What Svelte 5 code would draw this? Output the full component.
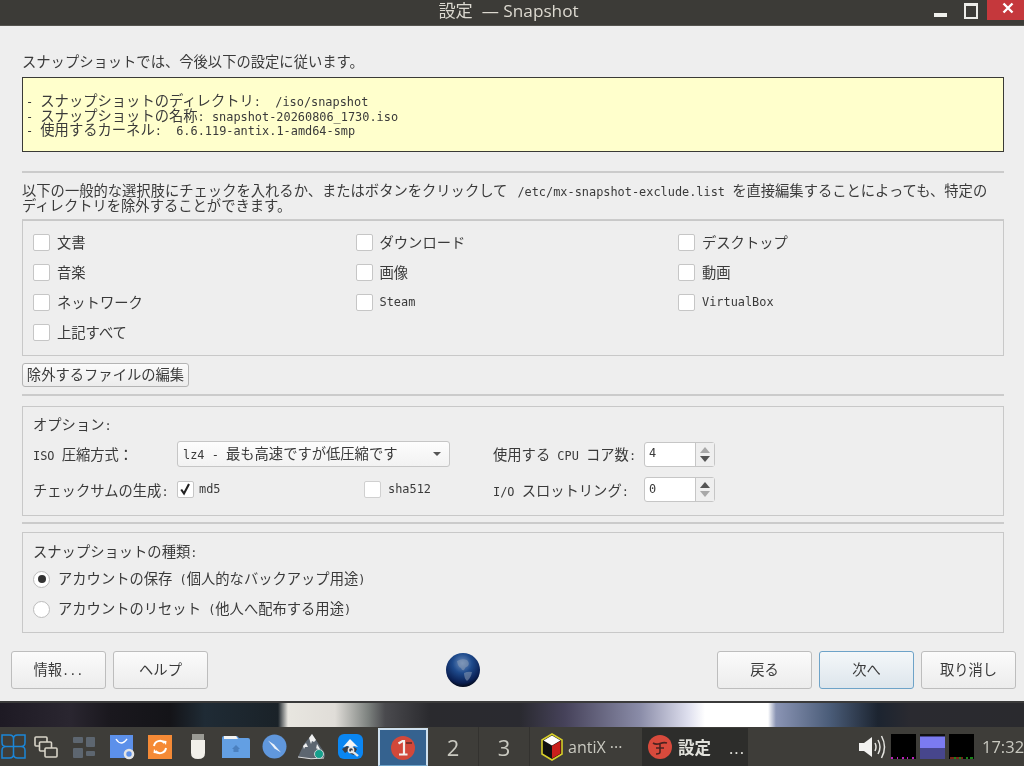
<script>
  const excludes = [
    ['文書', false], ['ダウンロード', false], ['デスクトップ', false],
    ['音楽', false], ['画像', false], ['動画', false],
    ['ネットワーク', false], ['Steam', true], ['VirtualBox', true],
    ['上記すべて', false]
  ];
</script>

<div class="screen">
  <header class="titlebar">
    <span class="title">設定 &nbsp;— Snapshot</span>
    <div class="winbtns">
      <span class="wmin"></span>
      <span class="wmax"></span>
      <span class="wclose">
        <svg width="12" height="12" viewBox="0 0 12 12"><path d="M1.5 1.5l9 9M10.5 1.5l-9 9" stroke="#fff" stroke-width="2.4" fill="none"/></svg>
      </span>
    </div>
  </header>

  <div class="window">
    <div class="content">
      <p class="intro">スナップショットでは、今後以下の設定に従います。</p>
      <div class="note">
        <div class="ln"><span class="m">-&nbsp;</span>スナップショットのディレクトリ<span class="m">:&nbsp;&nbsp;/iso/snapshot</span></div>
        <div class="ln"><span class="m">-&nbsp;</span>スナップショットの名称<span class="m">:&nbsp;snapshot-20260806_1730.iso</span></div>
        <div class="ln"><span class="m">-&nbsp;</span>使用するカーネル<span class="m">:&nbsp;&nbsp;6.6.119-antix.1-amd64-smp</span></div>
      </div>
      <hr class="sep s1" />
      <div class="desc">
        <div class="ln">以下の一般的な選択肢にチェックを入れるか、またはボタンをクリックして<span class="m path">/etc/mx-snapshot-exclude.list&nbsp;</span>を直接編集することによっても、特定の</div>
        <div class="ln">ディレクトリを除外することができます。</div>
      </div>
      <hr class="sep s2" />
      <section class="group excl">
        {#each excludes as [label, mono]}
          <label class="chk"><span class="box"></span><span class:m={mono} class:cj={!mono}>{label}</span></label>
        {/each}
      </section>
      <button class="btn editbtn">除外するファイルの編集</button>
      <hr class="sep s3" />
      <section class="group opts">
        <div class="optshead">オプション<span class="m">:</span></div>
        <div class="optgrid">
          <div class="lbl"><span class="m">ISO&nbsp;</span>圧縮方式：</div>
          <div class="combo"><span class="cj"><span class="m">lz4&nbsp;-&nbsp;</span>最も高速ですが低圧縮です</span><i class="caret"></i></div>
          <div class="lbl">使用する<span class="m">&nbsp;CPU&nbsp;</span>コア数<span class="m">:</span></div>
          <div class="spin"><span class="m">4</span><div class="arrows"><i class="up dim"></i><i class="down"></i></div></div>

          <div class="lbl">チェックサムの生成<span class="m">:</span></div>
          <div class="sums">
            <label class="chk md5">
              <span class="box"><svg width="15" height="15" viewBox="0 0 15 15"><path d="M3.2 7.5l2.8 4 5-9.5" stroke="#222" stroke-width="2.1" fill="none"/></svg></span>
              <span class="m">md5</span>
            </label>
            <label class="chk sha"><span class="box"></span><span class="m">sha512</span></label>
          </div>
          <div class="lbl"><span class="m">I/O&nbsp;</span>スロットリング<span class="m">:</span></div>
          <div class="spin"><span class="m">0</span><div class="arrows"><i class="up"></i><i class="down dim"></i></div></div>
        </div>
      </section>
      <hr class="sep s4" />
      <section class="group kinds">
        <div class="optshead">スナップショットの種類<span class="m">:</span></div>
        <label class="radio first"><span class="dot on"></span><span class="cj">アカウントの保存<span class="m">&nbsp;(</span>個人的なバックアップ用途<span class="m">)</span></span></label>
        <label class="radio"><span class="dot"></span><span class="cj">アカウントのリセット<span class="m">&nbsp;(</span>他人へ配布する用途<span class="m">)</span></span></label>
      </section>
    </div>

    <footer class="footer">
      <button class="btn big">情報<span class="m">...</span></button>
      <button class="btn big">ヘルプ</button>
      <svg class="globe" width="36" height="36" viewBox="0 0 36 36">
        <defs>
          <radialGradient id="gl" cx="0.48" cy="0.3" r="0.72">
            <stop offset="0" stop-color="#6f8fbd"/>
            <stop offset="0.4" stop-color="#1e4a8c"/>
            <stop offset="0.8" stop-color="#0a1f52"/>
            <stop offset="1" stop-color="#020610"/>
          </radialGradient>
        </defs>
        <circle cx="18" cy="18" r="17" fill="url(#gl)"/>
        <path d="M12 9q5-3 10-1 3 3 1 6-3 1-4 4-2 1-3-2-3-1-4-7zM19 21q4-2 8-1-1 6-5 9-3-3-3-8z" fill="#8d9db5" opacity=".55"/>
      </svg>
      <div class="rightbtns">
        <button class="btn big">戻る</button>
        <button class="btn big default">次へ</button>
        <button class="btn big">取り消し</button>
      </div>
    </footer>
  </div>

  <div class="wallpaper"></div>

  <nav class="taskbar">
    <span class="ti first">
      <svg width="25" height="25" viewBox="0 0 25 25" fill="none" stroke="#1b86d8" stroke-width="1.5"><path d="M12.5 12.5V5q0-4-4-4H1v7.500q0 4 4 4zM12.500 12.500V5q0-4 4-4H24v7.500q0 4-4 4zM12.500 12.500V20q0 4-4 4H1v-7.500q0-4 4-4zM12.500 12.500V20q0 4 4 4H24v-7.500q0-4-4-4z"/></svg>
    </span>
    <span class="ti">
      <svg width="24" height="24" viewBox="0 0 24 24" fill="#3e3d39" stroke="#d8d4c8" stroke-width="1.600"><rect x="1" y="2" width="12" height="9" rx="1"/><rect x="5.500" y="7" width="12" height="9" rx="1"/><rect x="11" y="13" width="12" height="9" rx="1"/></svg>
    </span>
    <span class="ti">
      <svg width="24" height="24" viewBox="0 0 24 24" fill="#5d6670"><rect x="1" y="2" width="10" height="6" rx="1"/><rect x="14" y="2" width="9" height="10" rx="1"/><rect x="1" y="13" width="10" height="10" rx="1"/><rect x="14" y="16" width="9" height="5" rx="1"/></svg>
    </span>
    <span class="ti">
      <svg width="26" height="26" viewBox="0 0 26 26"><rect x="1" y="1" width="23" height="23" fill="#5c90ea"/><path d="M7 5q5 8 11 0" stroke="#fff" stroke-width="1.400" fill="none"/><circle cx="20" cy="20" r="4" fill="#5c90ea" stroke="#e4e4e4" stroke-width="2.600"/></svg>
    </span>
    <span class="ti">
      <svg width="24" height="24" viewBox="0 0 24 24"><rect width="24" height="24" fill="#f58a36"/><path d="M6 11a6 6 0 0 1 10.500-3M18 13a6 6 0 0 1-10.500 3" stroke="#fff" stroke-width="2" fill="none"/><path d="M14.500 5.500l4 .5-.5 4zM9.500 18.500l-4-.5.500-4z" fill="#fff"/></svg>
    </span>
    <span class="ti">
      <svg width="16" height="26" viewBox="0 0 16 26"><rect x="2" y="0" width="12" height="7" fill="#9a9a94"/><path d="M1 6h14v13q0 6-7 6t-7-6z" fill="#f2f0ea"/></svg>
    </span>
    <span class="ti">
      <svg width="28" height="23" viewBox="0 0 28 23"><path d="M2 1h13l2 2h9q2 0 2 2v18H0V3q0-2 2-2z" fill="#639fe3"/><path d="M2 1h12l2 3H2z" fill="#f2f2f2"/><path d="M14 10l-4 4h1.500v3h5v-3H18z" fill="#4b80bf"/></svg>
    </span>
    <span class="ti">
      <svg width="25" height="25" viewBox="0 0 25 25"><circle cx="12.500" cy="12.500" r="12" fill="#6097dc"/><path d="M6 6.500l6 4 7 8-6.500-4z" fill="#eef3fa"/></svg>
    </span>
    <span class="ti">
      <svg width="28" height="27" viewBox="0 0 28 27"><path d="M0 24L6 11l5-6 3-4 6 9 6 9q2 4 0 6-13 2-26-1z" fill="#5d6670"/><path d="M11 5l3-4 4 6-2 2-2-1-1 3zM5 13l3-3 2 4-3 0-1 2zM19 11l3 5-2 1-1-2-1 1z" fill="#f0f0f0"/><path d="M0 24q13 3 26 1" stroke="#ddd" fill="none"/><circle cx="21" cy="21" r="4.500" fill="#16a08c" stroke="#c9d4d4"/></svg>
    </span>
    <span class="ti">
      <svg width="25" height="25" viewBox="0 0 25 25"><rect width="25" height="25" rx="6" fill="#0a86f2"/><path d="M5 13l7-8 8 8-4-1-3 2-3-2z" fill="#f4f4f4"/><path d="M4 15l5-3 4 2 3-1 3 2-3 6-3-1-3-3-3 2z" fill="#3a3d44"/><path d="M13 17q4 2 7 5" stroke="#e8e8e8" stroke-width="2.400" fill="none"/><circle cx="13" cy="16" r="2.600" fill="none" stroke="#e8e8e8" stroke-width="1.500"/></svg>
    </span>

    <div class="pager">
      <span class="page active">
        <svg width="26" height="26" viewBox="0 0 26 26"><circle cx="13" cy="13" r="12" fill="#d2483a"/><path d="M8.500 8.500l4-2.500h1.500v13M9 19.500h8.500" stroke="#f2f2ef" stroke-width="2.200" fill="none"/><path d="M16 8h6" stroke="#5a2a28" stroke-width="1.500"/></svg>
      </span>
      <span class="page">2</span>
      <span class="page">3</span>
    </div>

    <div class="task">
      <svg width="22" height="28" viewBox="0 0 22 28"><path d="M11 1l10 6v14l-10 6-10-6V7z" fill="#111" stroke="#d8cf2a" stroke-width="1.600"/><path d="M11 2.500l8.500 5-8.500 5-8.500-5z" fill="#fff"/><path d="M11 13l8.500-5v12.500l-8.500 5z" fill="#c9201c"/></svg>
      <span class="tasktext">antiX ···</span>
    </div>
    <div class="task current">
      <svg width="24" height="24" viewBox="0 0 24 24"><circle cx="12" cy="12" r="12" fill="#d84a3c"/><path d="M5 8q3 2 7 .5t7-.500M12 9v8q0 2-4 2M8 13h8" stroke="#4a2320" stroke-width="1.600" fill="none"/></svg>
      <b>設定</b><span class="dots">...</span>
    </div>

    <div class="tray">
      <svg width="29" height="26" viewBox="0 0 29 26"><path d="M1 9h5l8-6v20l-8-6H1z" fill="#f2f2f0"/><path d="M17 9q2 4 0 8M20 6q4 7 0 14M23.500 2q6 11 0 22" stroke="#e4e4e0" stroke-width="1.500" fill="none"/></svg>
      <svg class="graph" width="25" height="25" viewBox="0 0 25 25"><rect width="25" height="25"/><path d="M0 24h2M6 24h1M11 24h2M16 24h1M21 24h2" stroke="#c020c0" stroke-width="2"/></svg>
      <svg class="graph" width="25" height="25" viewBox="0 0 25 25"><rect width="25" height="25" fill="#47468c"/><rect width="25" height="2" fill="#111"/><rect y="3" width="25" height="11" fill="#7b7bf0"/></svg>
      <svg class="graph" width="25" height="25" viewBox="0 0 25 25"><rect width="25" height="25"/><path d="M1 24h4M7 24h3M12 24h2" stroke="#a03020" stroke-width="1.600"/><path d="M5 24h2M10 24h2M17 24h2M21 24h3" stroke="#20b020" stroke-width="1.600"/></svg>
      <span class="clock">17:32</span>
    </div>
  </nav>
</div>

<style>
  :global(body) { margin: 0; background: #eee; }
  .screen {
    width: 1024px; height: 766px; display: flex; flex-direction: column; overflow: hidden;
    font-family: "Noto Sans CJK JP", "Noto Sans", sans-serif; font-size: 14.3px; color: #3a3a3a;
    filter: blur(0.5px);
  }
  .m { font-family: "DejaVu Sans Mono", monospace; font-size: 11.9px; line-height: 1; }
  .path { padding-left: 10px; }
  .cj { padding-bottom: 3px; }
  p { margin: 0; }
  .ln { height: 14.5px; line-height: 14.5px; white-space: nowrap; }

  .titlebar {
    height: 26px; flex: none; background: #3c3b37; color: #dcd9d0; position: relative;
    display: flex; align-items: center; justify-content: center; border-bottom: 1px solid #55544f; box-sizing: border-box;
  }
  .title { font-family: "Open Sans", "Noto Sans CJK JP", sans-serif; font-size: 17.2px; line-height: 24px; margin-left: -7px; margin-top: -3px; }
  .winbtns { position: absolute; right: 0; top: 0; display: flex; }
  .wmin { width: 13px; height: 4px; background: #f0f0ec; margin: 13px 17px 0 0; }
  .wmax { height: 11px; border: 2px solid #ecece8; border-top-width: 3px; margin: 3px 9px 0 0; box-sizing: content-box; width: 10px; }
  .wclose { width: 37px; height: 20px; background: #c5383c; padding-left: 4px; display: flex; align-items: flex-start; justify-content: center; padding-top: 2px; box-sizing: border-box; }

  .window { flex: 1; background: #eee; display: flex; flex-direction: column; }
  .content { padding: 0 20px 0 22px; }
  .intro { margin-top: 26px; height: 18px; line-height: 18px; white-space: nowrap; }

  .note {
    margin-top: 7px; height: 75px; box-sizing: border-box; background: #ffffcc; border: 1px solid #3a3a36;
    padding: 15px 0 0 3px;
  }

  .sep { border: 0; height: 2px; background: #cbcbcb; margin: 0; }
  .s1 { margin-top: 19px; }
  .desc { margin-top: 10px; height: 29px; }
  .s2 { margin-top: 7px; height: 1px; }

  .group { border: 1px solid #c8c8c8; box-sizing: border-box; padding-left: 10px; }
  .excl {
    height: 136px; display: grid; grid-template-columns: 322.500px 322.500px 1fr; grid-auto-rows: 30px;
    padding-top: 6.500px;
  }
  .chk { display: flex; align-items: center; gap: 7px; }
  .box {
    width: 17px; height: 17px; flex: none; background: #fff; border: 1px solid #c6c6c6; border-radius: 2px; box-sizing: border-box;
    display: flex; align-items: center; justify-content: center;
  }

  .btn {
    font: inherit; color: inherit; background: linear-gradient(#fbfbfb, #ececec); border: 1px solid #bdbdbd; border-radius: 3px; padding: 0 0 3px;
  }
  .editbtn { display: block; margin-top: 7px; width: 167px; height: 24px; line-height: 18px; border-color: #b4b4b4; }
  .s3 { margin-top: 7px; }

  .opts { margin-top: 10px; height: 110px; }
  .optshead { height: 20px; line-height: 20px; }
  .opts .optshead { margin-top: 7px; }
  .optgrid { display: grid; grid-template-columns: 144px 316px 151px 71px; grid-template-rows: 26px 25px; row-gap: 10px; margin-top: 7px; align-items: center; }
  .lbl { padding-bottom: 1px; white-space: nowrap; }
  .combo {
    width: 273px; height: 26px; box-sizing: border-box; background: linear-gradient(#fdfdfd, #f2f2f2); border: 1px solid #c6c6c6; border-radius: 3px;
    display: flex; align-items: center; justify-content: space-between; padding: 0 8px 0 5px;
  }
  .caret { width: 0; height: 0; border: 4.500px solid transparent; border-top: 4.500px solid #555; border-bottom: 0; }
  .sums { display: flex; }
  .md5 { width: 187px; gap: 5px; }
  .sha .box { border-color: #d0d0d0; }
  .spin {
    width: 71px; height: 25px; box-sizing: border-box; background: #fff; border: 1px solid #c6c6c6; border-radius: 3px;
    display: flex; align-items: center; justify-content: space-between; padding-left: 4px;
  }
  .arrows { width: 18px; height: 100%; background: #efefef; border-left: 1px solid #c6c6c6; display: flex; flex-direction: column; align-items: center; justify-content: center; gap: 3px; }
  .arrows i { width: 0; height: 0; border-left: 5px solid transparent; border-right: 5px solid transparent; }
  .up { border-bottom: 6px solid #555; }
  .down { border-top: 6px solid #555; }
  .up.dim { border-bottom-color: #a8a8a8; }
  .down.dim { border-top-color: #a8a8a8; }

  .s4 { margin-top: 6px; }
  .kinds { margin-top: 8px; height: 101px; }
  .kinds .optshead { margin-top: 8px; }
  .radio { display: flex; align-items: center; height: 30px; white-space: nowrap; }
  .radio.first { margin-top: 3px; }
  .dot {
    width: 17px; height: 17px; box-sizing: border-box; border-radius: 50%; background: #fff; border: 1px solid #bcbcbc; margin-right: 8px;
    display: flex; align-items: center; justify-content: center;
  }
  .dot.on::after { content: ""; width: 8px; height: 8px; border-radius: 50%; background: #333; }

  .footer { display: flex; align-items: center; padding: 18px 8px 0 11px; }
  .big { width: 95px; height: 38px; }
  .big + .big { margin-left: 7px; }
  .globe { margin-left: 237px; }
  .rightbtns { margin-left: auto; display: flex; }
  .default { border-color: #6ea3c8; background: linear-gradient(#f4f7f9, #dde5ec); }

  .wallpaper {
    height: 26px; flex: none; border-top: 2px solid #3a3a3a; box-sizing: border-box;
    background: linear-gradient(90deg, #1e1a24 0, #2a2630 70px, #1a181e 110px, #141418 170px, #1f2b35 205px, #1a2228 278px, #e8e6e0 288px, #e0ddd8 335px, #7d827f 368px, #4a4a4e 385px, #2a2a2e 430px, #2a2a30 520px, #46425a 565px, #8a8ca8 640px, #dedfee 688px, #fff 705px, #fff 768px, #8a94b4 776px, #4a5c78 830px, #1c2430 878px, #2a2a30 910px, #2a2a2e 1024px);
  }

  .taskbar { height: 39px; flex: none; background: #3e3d39; display: flex; align-items: center; color: #c9c9c0; font-family: "Open Sans", "Noto Sans CJK JP", sans-serif; }
  .ti { width: 38px; height: 100%; flex: none; display: flex; align-items: center; justify-content: center; }
  .ti.first { width: 27px; }
  .pager { display: flex; height: 100%; margin-left: 9px; flex: none; font-size: 22px; }
  .page { width: 51px; height: 100%; display: flex; align-items: center; justify-content: center; box-sizing: border-box; border-right: 1px solid #33322f; }
  .page.active { width: 50px; background: #35628f; border: 2px solid #cfe0ee; border-bottom: 1px solid #6ea3c8; margin-top: 1px; height: 38px; }
  .task { height: 100%; display: flex; align-items: center; box-sizing: border-box; flex: none; }
  .task:not(.current) { width: 112px; padding-left: 11px; gap: 5px; font-size: 16px; }
  .tasktext { white-space: nowrap; }
  .current { width: 106px; background: #2d2d2b; padding-left: 6px; gap: 6px; font-size: 16.500px; color: #e2e2dc; margin-top: 1px; }
  .current b { font-weight: 700; }
  .dots { margin-left: 12px; letter-spacing: 1px; }
  .tray { margin-left: auto; display: flex; align-items: center; height: 100%; padding-right: 0; }
  .graph { margin-left: 4px; margin-top: -1px; }
  .clock { margin-left: 8px; font-size: 16.500px; white-space: nowrap; width: 42px; }
</style>
